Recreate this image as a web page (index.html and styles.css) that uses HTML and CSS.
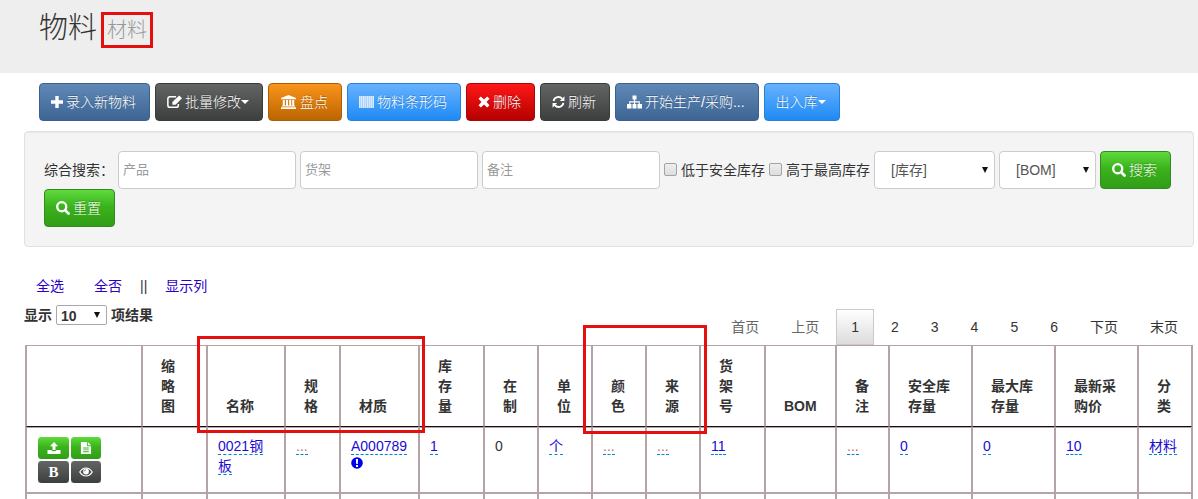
FILE: index.html
```html
<!DOCTYPE html>
<html lang="zh-CN">
<head>
<meta charset="utf-8">
<title>物料</title>
<link rel="stylesheet" href="styles.css">
</head>
<body>
<svg class="sprite" aria-hidden="true">
  <symbol id="i-plus" viewBox="0 0 12 12"><path d="M4.300 0h3.400v4.300H12v3.400H7.700V12H4.300V7.700H0V4.300h4.300z"/></symbol>
  <symbol id="i-edit" viewBox="0 0 14 12"><path fill="none" stroke="currentColor" stroke-width="1.4" d="M8.500 1.200H2.800Q.8 1.200.8 3.200v5.800q0 2 2 2h5.800q2 0 2-2V7.800"/><path d="M11.400-.1L14 2.400 8 8.600H5V5.900z"/></symbol>
  <symbol id="i-bank" viewBox="0 0 16 14"><path d="M8 0l7.500 3v1.200H.5V3zM2.300 5h2v5.500h1.200V5h2v5.500h1.200V5h2v5.500h1V5h2v5.500h.8v1H1.500v-1h.8zM.5 12.300h15V14H.5z"/></symbol>
  <symbol id="i-barcode" viewBox="0 0 15 12"><path opacity=".45" d="M0 0h15v12H0z"/><path d="M0 0h1.500v12H0zM2 0h1v12H2zM3.600 0h2v12h-2zM6.200 0h1v12h-1zM7.800 0h1.700v12H7.800zM10 0h.9v12H10zM11.400 0h1.500v12h-1.500zM13.500 0H15v12h-1.500z"/></symbol>
  <symbol id="i-times" viewBox="0 0 12 12"><path d="M2.800.5L6 3.500l3.200-3 2.300 2.300L8.500 6l3 3.200-2.300 2.300L6 8.500l-3.200 3L.5 9.200l3-3.200-3-3.200z"/></symbol>
  <symbol id="i-refresh" viewBox="0 0 14 14"><path fill="none" stroke="currentColor" stroke-width="2" d="M1.700 6A5.300 5.300 0 0 1 11 3.600M12.300 8A5.300 5.300 0 0 1 3 10.400"/><path d="M13.400.8v5H8.500zM.6 13.200v-5h4.900z"/></symbol>
  <symbol id="i-sitemap" viewBox="0 0 15 13"><path d="M5.500 0h4v4H8.100v1.800h4.700V8.600H15V13h-4.500V8.600h1.200V7H8.100v1.600h1.400V13h-4V8.600h1.400V7H3.300v1.600h1.200V13H0V8.600h2.200V5.800h4.700V4H5.500z"/></symbol>
  <symbol id="i-search" viewBox="0 0 13 13"><circle cx="5.300" cy="5.300" r="4.200" fill="none" stroke="currentColor" stroke-width="2.200"/><path stroke="currentColor" stroke-width="2.600" stroke-linecap="round" d="M8.700 8.700l2.900 2.900"/></symbol>
  <symbol id="i-upload" viewBox="0 0 14 12"><path d="M7 0l4 4.200H8.500V8h-3V4.200H3zM.5 8h3.800q.5 1.300 2.700 1.300T9.700 8h3.800v4H.5z"/></symbol>
  <symbol id="i-file" viewBox="0 0 12 13"><path fill-rule="evenodd" d="M.5 0H7v4.500h4.500V13H.5zM8 0l3.500 3.500H8zM3 6v1h6V6zM3 8v1h6V8zM3 10v1h6v-1z"/></symbol>
  <symbol id="i-eye" viewBox="0 0 14 10"><path fill="none" stroke="currentColor" stroke-width="1.200" d="M.8 5Q3.200 1 7 1t6.200 4Q10.800 9 7 9T.8 5z"/><circle cx="7" cy="4.500" r="2.900"/><path fill="none" stroke="#4a4b4b" stroke-width=".7" d="M5.300 4.500Q5.400 3 7 2.900"/></symbol>
  <symbol id="i-alert" viewBox="0 0 12 12"><circle cx="6" cy="6" r="5.800"/><path fill="#fff" d="M4.900 2h2.200l-.3 5H5.200zM5 8h2v2H5z"/></symbol>
</svg>

<header class="page-header">
  <h1 class="page-title">物料 <small class="page-subtitle">材料</small></h1>
</header>

<main class="content">
  <div class="toolbar">
    <button type="button" class="btn btn-primary"><svg class="icon w12"><use href="#i-plus"/></svg>录入新物料</button>
    <button type="button" class="btn btn-dark"><svg class="icon w15"><use href="#i-edit"/></svg>批量修改<span class="caret"></span></button>
    <button type="button" class="btn btn-warning"><svg class="icon w17"><use href="#i-bank"/></svg>盘点</button>
    <button type="button" class="btn btn-info"><svg class="icon w15 faded"><use href="#i-barcode"/></svg>物料条形码</button>
    <button type="button" class="btn btn-danger"><svg class="icon w12"><use href="#i-times"/></svg>删除</button>
    <button type="button" class="btn btn-dark"><svg class="icon w13"><use href="#i-refresh"/></svg>刷新</button>
    <button type="button" class="btn btn-primary"><svg class="icon w15"><use href="#i-sitemap"/></svg>开始生产/采购...</button>
    <button type="button" class="btn btn-info">出入库<span class="caret"></span></button>
  </div>

  <form class="search-panel">
    <label for="q-product">综合搜索：</label>
    <input id="q-product" class="field" type="text" placeholder="产品">
    <input class="field" type="text" placeholder="货架" aria-label="货架">
    <input class="field" type="text" placeholder="备注" aria-label="备注">
    <label class="check"><input type="checkbox">低于安全库存</label>
    <label class="check"><input type="checkbox">高于最高库存</label>
    <span class="select select-stock"><select aria-label="库存"><option>[库存]</option></select></span>
    <span class="select select-bom"><select aria-label="BOM"><option>[BOM]</option></select></span>
    <button type="button" class="btn btn-success"><svg class="icon w14"><use href="#i-search"/></svg>搜索</button>
    <button type="reset" class="btn btn-success"><svg class="icon w14"><use href="#i-search"/></svg>重置</button>
  </form>

  <nav class="quick-links">
    <a href="#">全选</a>
    <a href="#">全否</a>
    <span class="divider">||</span>
    <a href="#">显示列</a>
  </nav>

  <div class="table-bar">
    <label class="page-size">显示 <span class="select select-size"><select><option>10</option></select></span> 项结果</label>
    <nav class="pagination">
      <a href="#" class="disabled">首页</a>
      <a href="#" class="disabled">上页</a>
      <a href="#" class="active">1</a>
      <a href="#">2</a>
      <a href="#">3</a>
      <a href="#">4</a>
      <a href="#">5</a>
      <a href="#">6</a>
      <a href="#">下页</a>
      <a href="#">末页</a>
    </nav>
  </div>

  <div class="table-wrap">
    <table class="grid">
      <colgroup>
        <col class="c-actions"><col class="c-mid"><col class="c-name"><col class="c-spec"><col class="c-material"><col class="c-mid">
        <col class="c-small"><col class="c-small"><col class="c-small"><col class="c-small"><col class="c-mid"><col class="c-bom">
        <col class="c-note"><col class="c-wide"><col class="c-wide"><col class="c-wide"><col class="c-small">
      </colgroup>
      <thead>
        <tr><th></th><th>缩略图</th><th>名称</th><th>规格</th><th>材质</th><th>库存量</th><th>在制</th><th>单位</th><th>颜色</th><th>来源</th><th>货架号</th><th>BOM</th><th>备注</th><th>安全库存量</th><th>最大库存量</th><th>最新采购价</th><th>分类</th></tr>
      </thead>
      <tbody>
        <tr>
          <td>
            <div class="actions">
              <button type="button" class="btn-mini btn-success" aria-label="上传"><svg class="icon w14"><use href="#i-upload"/></svg></button>
              <button type="button" class="btn-mini btn-success" aria-label="文件"><svg class="icon w12"><use href="#i-file"/></svg></button>
              <button type="button" class="btn-mini btn-dark bold-mark">B</button>
              <button type="button" class="btn-mini btn-dark" aria-label="查看"><svg class="icon w14"><use href="#i-eye"/></svg></button>
            </div>
          </td>
          <td></td>
          <td><a href="#" class="editable">0021钢板</a></td>
          <td><a href="#" class="editable empty">...</a></td>
          <td><a href="#" class="editable">A000789</a> <svg class="alert"><use href="#i-alert"/></svg></td>
          <td><a href="#" class="editable">1</a></td>
          <td>0</td>
          <td><a href="#" class="editable">个</a></td>
          <td><a href="#" class="editable empty">...</a></td>
          <td><a href="#" class="editable empty">...</a></td>
          <td><a href="#" class="editable">11</a></td>
          <td></td>
          <td><a href="#" class="editable empty">...</a></td>
          <td><a href="#" class="editable">0</a></td>
          <td><a href="#" class="editable">0</a></td>
          <td><a href="#" class="editable">10</a></td>
          <td><a href="#" class="editable">材料</a></td>
        </tr>
        <tr class="next-row"><td></td><td></td><td></td><td></td><td></td><td></td><td></td><td></td><td></td><td></td><td></td><td></td><td></td><td></td><td></td><td></td><td></td></tr>
      </tbody>
    </table>
    <div class="mark mark-name"></div>
    <div class="mark mark-color"></div>
  </div>
</main>
</body>
</html>
```
FILE: styles.css
```css
* { box-sizing: border-box; }

body {
  margin: 0;
  background: #fff;
  color: #333;
  font: 14px/20px "Liberation Sans", "Noto Sans CJK SC", sans-serif;
}

.sprite { display: none; }

.page-header {
  height: 73px;
  padding: 8px 39px;
  background: #eee;
}

.page-title {
  display: flex;
  align-items: center;
  gap: 4px;
  margin: 0;
  font-size: 29px;
  font-weight: 300;
  line-height: 36px;
}

.page-subtitle {
  margin-top: 4px;
  padding: 0 3px;
  border: 3px solid #e60f0f;
  color: #999;
  font-size: 20px;
  line-height: 30px;
}

.content { padding: 10px 4px 0 24px; }

.toolbar {
  display: flex;
  flex-wrap: wrap;
  gap: 5px;
  padding-left: 15px;
}

.btn {
  display: inline-flex;
  align-items: center;
  height: 38px;
  padding: 0 13px 0 11px;
  border: 1px solid;
  border-radius: 4px;
  color: #fff;
  font: inherit;
  font-weight: 300;
  white-space: nowrap;
  text-shadow: 0 -1px 0 rgba(0, 0, 0, .25);
}

.btn .icon { margin-right: 3px; }

.icon {
  flex: none;
  height: 14px;
  fill: currentColor;
  overflow: visible;
}

.w12 { width: 12px; }
.w13 { width: 13px; }
.w14 { width: 14px; }
.w15 { width: 15px; }
.w17 { width: 17px; }
.faded { opacity: .8; }

.caret {
  border: 4px solid transparent;
  border-top-color: #fff;
  border-bottom: 0;
}

.btn-primary { background: linear-gradient(#6089b8, #3d6594); border-color: #3b618d; }
.btn-dark { background: linear-gradient(#636564, #3d3e3e); border-color: #3a3b3b; }
.btn-warning { background: linear-gradient(#f9941b, #bd6500); border-color: #a85e0a; }
.btn-info { background: linear-gradient(#67b2ff, #1e8af5); border-color: #2a7fd2; }
.btn-danger { background: linear-gradient(#ff1717, #b50000); border-color: #a80808; }
.btn-success { background: linear-gradient(#5fdb3d, #3bb31d 45%, #319d17); border-color: #348a20; }

.search-panel {
  display: flex;
  flex-wrap: wrap;
  align-items: center;
  gap: 0 4px;
  margin-top: 10px;
  padding: 19px;
  border: 1px solid #e1e1e1;
  border-radius: 4px;
  background: #f4f4f4;
  box-shadow: inset 0 1px 1px rgba(0, 0, 0, .05);
}

.field {
  width: 178px;
  height: 38px;
  padding: 0 4px 2px;
  border: 1px solid #ccc;
  border-radius: 4px;
  background: #fff;
  font: inherit;
  font-size: 13px;
}

.field::placeholder { color: #999; }

.check {
  display: flex;
  align-items: center;
  gap: 4px;
}

.check input {
  appearance: none;
  width: 13px;
  height: 13px;
  margin: 0 0 2px;
  border: 1px solid #a3a3a3;
  border-radius: 2px;
  background: linear-gradient(#eee, #ddd);
}

.select {
  position: relative;
  display: inline-block;
}

.select::after {
  content: "";
  position: absolute;
  top: calc(50% - 3px);
  right: 7px;
  border: 3px solid transparent;
  border-top: 6px solid #111;
  border-bottom: 0;
  pointer-events: none;
}

.select select {
  appearance: none;
  width: 100%;
  height: 38px;
  padding: 0 16px;
  border: 1px solid #ccc;
  border-radius: 4px;
  background: #fff;
  color: #555;
  font: inherit;
}

.select-stock { width: 121px; }
.select-bom { width: 97px; }

.quick-links {
  display: flex;
  margin-top: 29px;
  padding-left: 12px;
}

.quick-links a {
  margin-right: 30px;
  color: #2a00c8;
  text-decoration: none;
}

.quick-links a:nth-of-type(2) { margin-right: 18px; }
.quick-links .divider { margin-right: 18px; }

.table-bar {
  display: flex;
  justify-content: space-between;
  margin-top: 9px;
}

.page-size {
  display: flex;
  align-items: center;
  gap: 4px;
  height: 20px;
  font-weight: bold;
}

.select-size { width: 51px; }

.select-size select {
  display: block;
  height: 20px;
  padding: 0 4px 2px;
  border-color: #a9a9a9;
  border-radius: 2px;
  color: #333;
}

.pagination {
  display: flex;
  padding-top: 4px;
}

.pagination a {
  padding: 7px 15px;
  border: 1px solid transparent;
  color: #333;
  line-height: 20px;
  text-decoration: none;
}

.pagination .disabled { color: #666; }

.pagination .active {
  margin: 0 1px;
  padding: 7px 14px;
  border-color: #cacaca;
  background: linear-gradient(#fff, #dcdcdc);
}

.table-wrap {
  position: relative;
  margin: 0 1px;
}

.grid {
  width: 100%;
  table-layout: fixed;
  border-spacing: 0;
  border: solid #b5a3a5;
  border-width: 0 1px;
}

.c-actions { width: 116px; }
.c-mid { width: 65px; }
.c-name { width: 78px; }
.c-spec { width: 55px; }
.c-material { width: 79px; }
.c-small { width: 54px; }
.c-bom { width: 71px; }
.c-note { width: 53px; }
.c-wide { width: 83px; }

.grid th,
.grid td {
  border: 1px solid #b5a3a5;
  text-align: left;
}

.grid th {
  padding: 10px 18px;
  border-bottom-color: #111;
  font-weight: bold;
  vertical-align: bottom;
}

.grid td {
  padding: 8px 10px;
  vertical-align: top;
}

.grid .next-row td {
  padding: 3px;
  border-bottom: 0;
}

.editable {
  border-bottom: 1px dashed #0088cc;
  color: #1a0dd0;
  text-decoration: none;
}

.empty { color: #c56a80; }

.alert {
  display: block;
  width: 12px;
  height: 12px;
  margin-top: 1px;
  fill: #0000e6;
}

.actions {
  display: grid;
  grid-template-columns: 33px 32px;
}

.btn-mini {
  display: flex;
  align-items: center;
  justify-content: center;
  height: 24px;
  padding: 0;
  border: 1px solid;
  border-radius: 4px;
  color: #fff;
}

.btn-mini .icon { height: 12px; }

.bold-mark { font: bold 15px/20px "Liberation Serif", serif; }

.mark {
  position: absolute;
  border: 3px solid #e60f0f;
  pointer-events: none;
}

.mark-name {
  top: -9px;
  left: 172px;
  width: 228px;
  height: 97px;
}

.mark-color {
  top: -20px;
  left: 558px;
  width: 124px;
  height: 109px;
}
```
